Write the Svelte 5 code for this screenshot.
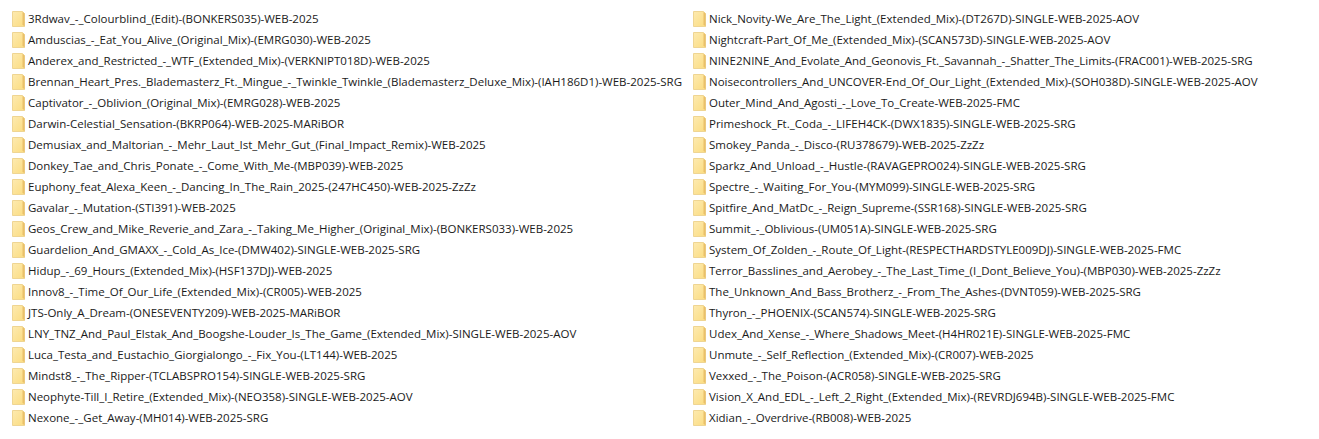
<script lang="ts">
	const left = [
		'3Rdwav_-_Colourblind_(Edit)-(BONKERS035)-WEB-2025',
		'Amduscias_-_Eat_You_Alive_(Original_Mix)-(EMRG030)-WEB-2025',
		'Anderex_and_Restricted_-_WTF_(Extended_Mix)-(VERKNIPT018D)-WEB-2025',
		'Brennan_Heart_Pres._Blademasterz_Ft._Mingue_-_Twinkle_Twinkle_(Blademasterz_Deluxe_Mix)-(IAH186D1)-WEB-2025-SRG',
		'Captivator_-_Oblivion_(Original_Mix)-(EMRG028)-WEB-2025',
		'Darwin-Celestial_Sensation-(BKRP064)-WEB-2025-MARiBOR',
		'Demusiax_and_Maltorian_-_Mehr_Laut_Ist_Mehr_Gut_(Final_Impact_Remix)-WEB-2025',
		'Donkey_Tae_and_Chris_Ponate_-_Come_With_Me-(MBP039)-WEB-2025',
		'Euphony_feat_Alexa_Keen_-_Dancing_In_The_Rain_2025-(247HC450)-WEB-2025-ZzZz',
		'Gavalar_-_Mutation-(STI391)-WEB-2025',
		'Geos_Crew_and_Mike_Reverie_and_Zara_-_Taking_Me_Higher_(Original_Mix)-(BONKERS033)-WEB-2025',
		'Guardelion_And_GMAXX_-_Cold_As_Ice-(DMW402)-SINGLE-WEB-2025-SRG',
		'Hidup_-_69_Hours_(Extended_Mix)-(HSF137DJ)-WEB-2025',
		'Innov8_-_Time_Of_Our_Life_(Extended_Mix)-(CR005)-WEB-2025',
		'JTS-Only_A_Dream-(ONESEVENTY209)-WEB-2025-MARiBOR',
		'LNY_TNZ_And_Paul_Elstak_And_Boogshe-Louder_Is_The_Game_(Extended_Mix)-SINGLE-WEB-2025-AOV',
		'Luca_Testa_and_Eustachio_Giorgialongo_-_Fix_You-(LT144)-WEB-2025',
		'Mindst8_-_The_Ripper-(TCLABSPRO154)-SINGLE-WEB-2025-SRG',
		'Neophyte-Till_I_Retire_(Extended_Mix)-(NEO358)-SINGLE-WEB-2025-AOV',
		'Nexone_-_Get_Away-(MH014)-WEB-2025-SRG',
	];
	const right = [
		'Nick_Novity-We_Are_The_Light_(Extended_Mix)-(DT267D)-SINGLE-WEB-2025-AOV',
		'Nightcraft-Part_Of_Me_(Extended_Mix)-(SCAN573D)-SINGLE-WEB-2025-AOV',
		'NINE2NINE_And_Evolate_And_Geonovis_Ft._Savannah_-_Shatter_The_Limits-(FRAC001)-WEB-2025-SRG',
		'Noisecontrollers_And_UNCOVER-End_Of_Our_Light_(Extended_Mix)-(SOH038D)-SINGLE-WEB-2025-AOV',
		'Outer_Mind_And_Agosti_-_Love_To_Create-WEB-2025-FMC',
		'Primeshock_Ft._Coda_-_LIFEH4CK-(DWX1835)-SINGLE-WEB-2025-SRG',
		'Smokey_Panda_-_Disco-(RU378679)-WEB-2025-ZzZz',
		'Sparkz_And_Unload_-_Hustle-(RAVAGEPRO024)-SINGLE-WEB-2025-SRG',
		'Spectre_-_Waiting_For_You-(MYM099)-SINGLE-WEB-2025-SRG',
		'Spitfire_And_MatDc_-_Reign_Supreme-(SSR168)-SINGLE-WEB-2025-SRG',
		'Summit_-_Oblivious-(UM051A)-SINGLE-WEB-2025-SRG',
		'System_Of_Zolden_-_Route_Of_Light-(RESPECTHARDSTYLE009DJ)-SINGLE-WEB-2025-FMC',
		'Terror_Basslines_and_Aerobey_-_The_Last_Time_(I_Dont_Believe_You)-(MBP030)-WEB-2025-ZzZz',
		'The_Unknown_And_Bass_Brotherz_-_From_The_Ashes-(DVNT059)-WEB-2025-SRG',
		'Thyron_-_PHOENIX-(SCAN574)-SINGLE-WEB-2025-SRG',
		'Udex_And_Xense_-_Where_Shadows_Meet-(H4HR021E)-SINGLE-WEB-2025-FMC',
		'Unmute_-_Self_Reflection_(Extended_Mix)-(CR007)-WEB-2025',
		'Vexxed_-_The_Poison-(ACR058)-SINGLE-WEB-2025-SRG',
		'Vision_X_And_EDL_-_Left_2_Right_(Extended_Mix)-(REVRDJ694B)-SINGLE-WEB-2025-FMC',
		'Xidian_-_Overdrive-(RB008)-WEB-2025',
	];
	const columns = [left, right];
</script>

<div class="listing">
	{#each columns as names}
		<ul class="column">
			{#each names as name}
				<li class="row">
					<svg class="folder" width="13" height="17" viewBox="0 0 13 17" aria-hidden="true">
						<defs>
							<linearGradient id="folderFill" x1="0" y1="0" x2="1" y2="1">
								<stop offset="0" stop-color="#fdeab0" />
								<stop offset="1" stop-color="#fbdc80" />
							</linearGradient>
						</defs>
						<path d="M0.5 1.5 H10.5 L12.5 3.5 V16.5 H0.5 Z" fill="url(#folderFill)" stroke="#efd592" />
						<path d="M10.5 2 V14.5 L12.5 16.5 V3.5 Z" fill="#e9c06a" />
					</svg>
					<span class="name">{name}</span>
				</li>
			{/each}
		</ul>
	{/each}
</div>

<style>
	:global(body) {
		background: #fff;
	}

	.listing {
		display: grid;
		grid-template-columns: 681px 1fr;
		padding: 8px 0 0 12px;
		font-family: "Open Sans", "Liberation Sans", sans-serif;
		font-size: 11.5px;
		color: #1a1a1a;
	}

	.column {
		list-style: none;
		margin: 0;
		padding: 0;
	}

	.row {
		display: flex;
		align-items: center;
		gap: 3px;
		height: 21px;
		white-space: nowrap;
	}

	.folder {
		flex: none;
	}
</style>
